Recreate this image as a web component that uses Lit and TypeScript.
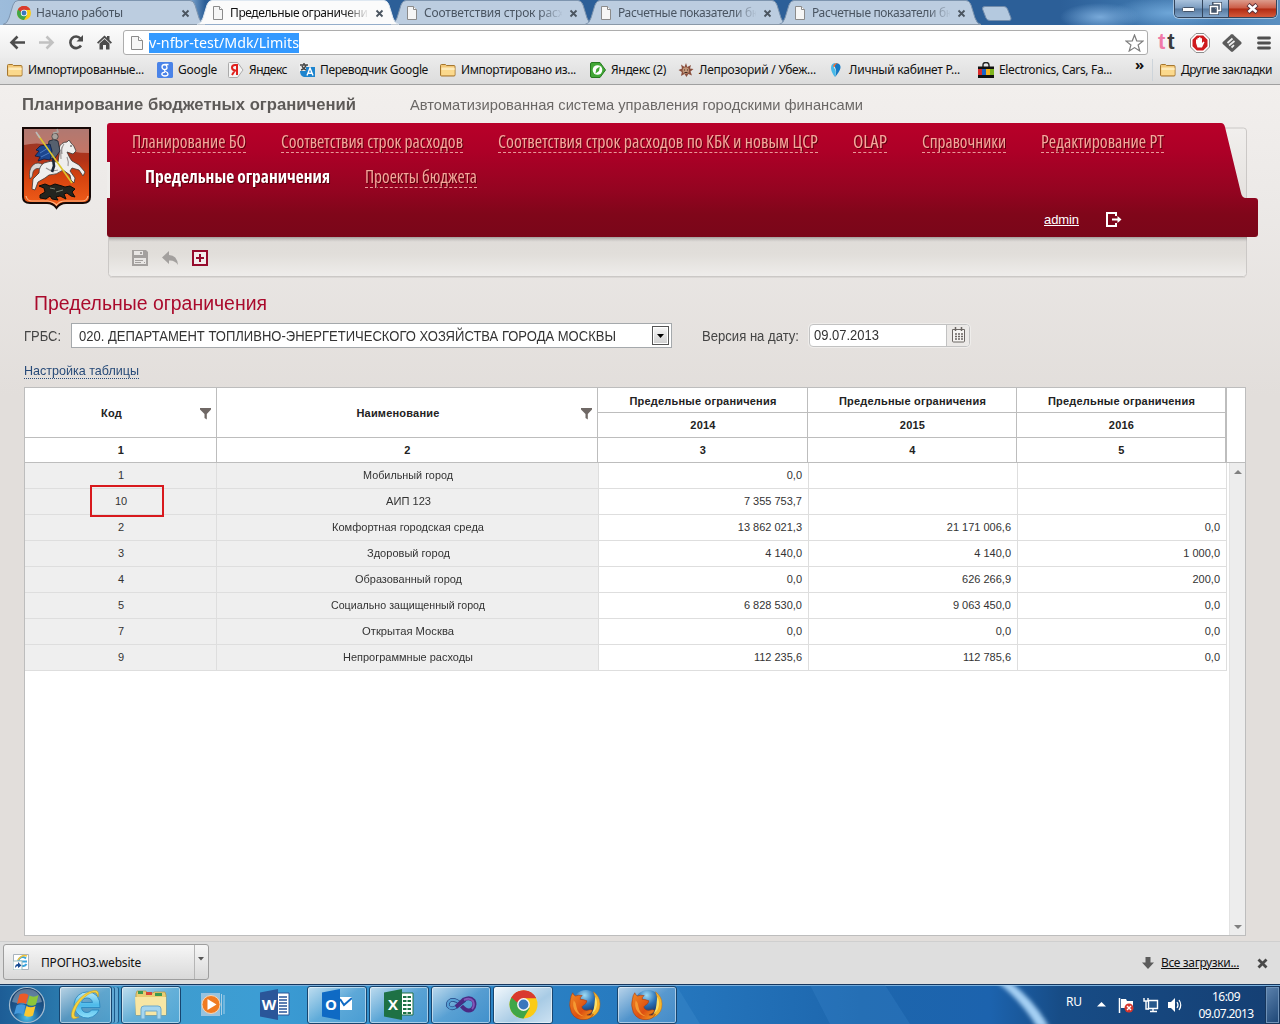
import { LitElement, html, svg, css } from "lit";
import { customElement, property } from "lit/decorators.js";

/* One line of text set to an exact width, by tracking or by condensing. */
@customElement("fit-text")
class FitText extends LitElement {
  @property({ type: Number }) w = 0;
  @property({ type: Boolean }) squeeze = false;
  static styles = css`
    :host { display: inline-block; white-space: nowrap; flex: none; }
    span { display: inline-block; transform-origin: 0 50%; white-space: nowrap; text-decoration: inherit; }
  `;
  firstUpdated() {
    const s = this.renderRoot.querySelector("span") as HTMLElement;
    const natural = s.getBoundingClientRect().width;
    const n = (this.textContent || "").length;
    this.style.width = this.w + "px";
    if (!natural || !n) return;
    if (this.squeeze) s.style.transform = `scaleX(${this.w / natural})`;
    else s.style.letterSpacing = `${(this.w - natural) / n}px`;
  }
  render() {
    return html`<span><slot></slot></span>`;
  }
}

const pageIcon = svg`<path d="M3.500 1.500h6l3 3v10h-9z" fill="#f6f6f6" stroke="#8b8b8b"/><path d="M9.500 1.500v3h3" fill="#fff" stroke="#8b8b8b"/>`;
const pageIconLarge = svg`<path d="M2.500 1.500h7l4 4v9h-11z" fill="#f6f6f6" stroke="#8b8b8b"/><path d="M9.500 1.500v4h4" fill="#fff" stroke="#8b8b8b"/>`;
const folder = svg`<path d="M.5 13V3.500q0-1 1-1h4l1 1h7.500q1 0 1 1V13q0 1-1 1h-12.500q-1 0-1-1z" fill="#f3c878" stroke="#a5772f"/><path d="M1.500 6h13v7h-13z" fill="#fbd98d"/><path d="M1.500 5.500h13v2.500h-13z" fill="#fdeab9"/>`;
const chromeIcon = svg`
  <circle cx="14" cy="14" r="14" fill="#fbcb16"/>
  <path d="M14 14 1.900 7A14 14 0 0 0 14 28l6.100-10.500z" fill="#3fa648"/>
  <path d="M14 14 1.900 7A14 14 0 0 1 26.500 7.600H14z" fill="#d93a2e"/>
  <path d="M1.900 7 8 17.500 14 14z" fill="#3fa648"/>
  <path d="M1.900 7A14 14 0 0 1 26.600 7.700H14a6.400 6.400 0 0 0-6 4.500z" fill="#d93a2e"/>
  <circle cx="14" cy="14" r="6.400" fill="#f6f6f6"/><circle cx="14" cy="14" r="4.900" fill="#3a77bd"/>`;
const closeX = svg`<path d="M1.500 1.500l6 6M7.500 1.500l-6 6" stroke="#4b5560" stroke-width="1.800"/>`;

const firefox = html`<svg width="32" height="32" viewBox="0 0 34 34">
  <defs><radialGradient id="g" cx=".45" cy=".2" r=".8"><stop offset="0" stop-color="#9fdcf5"/><stop offset=".45" stop-color="#2b72b8"/><stop offset="1" stop-color="#10234f"/></radialGradient>
  <linearGradient id="o" x1="0" y1="0" x2="1" y2="1"><stop offset="0" stop-color="#f08a24"/><stop offset=".6" stop-color="#dd4f12"/><stop offset="1" stop-color="#f7a823"/></linearGradient></defs>
  <circle cx="18" cy="15" r="14" fill="url(#g)"/>
  <path d="M26 3q7 5 7 13 0 9-7 13-5 3-11 2 9-2 12-9 3-9-1-19z" fill="#f6b62c" stroke="#c06a12" stroke-width=".5"/>
  <path d="M28 8q3 6 1 12-1 4-5 6 3-5 3-9 .5-5 1-9z" fill="#fbe06a"/>
  <path d="M4 4q1 3 3 3.500 3-1.500 7-.5-2.500 1.500-2 4 3 0 7 1.500 0 3-4 5-2 1-1 3 2 3 6 2 3-1 5 0-1 4-6 5 4 1 7-.5-3 5-9 5.500Q7 33.500 2.500 25-.5 17 1.500 11q.3-4 2.500-7z" fill="url(#o)" stroke="#a8380d" stroke-width=".6"/>
  <path d="M5 12q-2 7 2 12 4 5 9 5-7-3-8-10 0-4-3-7z" fill="#f59a33"/>
</svg>`;

const ieIcon = html`<svg width="32" height="32" viewBox="0 0 32 32">
  <defs><linearGradient id="i" x1="0" y1="0" x2="0" y2="1"><stop offset="0" stop-color="#b9ecfb"/><stop offset=".5" stop-color="#4cb9ea"/><stop offset="1" stop-color="#8fe0fa"/></linearGradient></defs>
  <path d="M17 3a13 13 0 1 0 12 18h-7.500q-1.500 2.500-4.500 2.500-5 0-5.500-5H30Q30.500 3 17 3zm-5.500 10.500Q12.500 9 17 9t5.500 4.500z" fill="url(#i)" stroke="#2483bd" stroke-width=".8"/>
  <path d="M28 8Q30 1 24 1.500 14 3 6 14q-5 8-4.500 13Q2 32 9 28q-6 1-4.500-4.500Q8 12 18 5.500 27 0 28 8z" fill="#f7d23e" stroke="#c99a1b" stroke-width=".5"/>
</svg>`;

@customElement("app-root")
class AppRoot extends LitElement {
  static styles = css`
    :host { display: block; width: 1280px; height: 1024px; overflow: hidden; font-family: "Liberation Sans", Arial, sans-serif; color: #444; }
    * { box-sizing: border-box; }
    svg { display: block; flex: none; }
    .screen { display: flex; flex-direction: column; width: 1280px; height: 1024px; }
    .ui { font-family: "Noto Sans", "Open Sans", sans-serif; color: #111; }

    /* tab strip */
    .strip { height: 25px; display: flex; align-items: flex-start; position: relative; padding-left: 3px;
      background: radial-gradient(ellipse 40px 14px at 1100px 17px, #78a9d9 0, transparent 100%), radial-gradient(ellipse 60px 16px at 1170px 13px, #6ea6d8 0, transparent 100%), linear-gradient(90deg, #9dbcdb 0, #7ea6cf 190px, #2c5f98 205px, #2c5f98 1060px, #386fa7 1120px, #5a8fc0 1280px); }
    .tab { position: relative; width: 202px; height: 25px; margin-right: -8px; display: flex; align-items: center; padding: 1px 0 0 13px; font-size: 12px; color: #4a5562; z-index: 1; }
    .tab.on { z-index: 2; color: #111; }
    .tab .shape { position: absolute; left: 0; top: 0; z-index: -1; }
    .tab .lbl { width: 138px; height: 20px; line-height: 20px; margin-left: 4px; overflow: hidden; -webkit-mask-image: linear-gradient(90deg, #000 115px, transparent 139px); }
    .tab .x { margin-left: 7px; }
    .newtab { margin: 6px 0 0 8px; }
    .winbtns { margin-left: 162px; display: flex; height: 18px; border: 1px solid #33455c; border-top: 0; border-radius: 0 0 5px 5px; overflow: hidden; box-shadow: 0 0 0 1px rgba(255,255,255,.45); }
    .wb { width: 28px; height: 17px; display: grid; place-items: center; background: linear-gradient(#aac3dd, #7b9cc0 48%, #56799f 52%, #7ea2c8); border-right: 1px solid #33455c; }
    .wb.mid { width: 26px; }
    .wb.red { width: 47px; border: 0; background: linear-gradient(#dd9c8c, #cb5b45 48%, #b12a12 52%, #d4593a); }

    /* address row */
    .addr { height: 33px; display: flex; align-items: center; padding: 2px 9px 0 9px; background: linear-gradient(#fcfcfc, #ececec); }
    .omni { margin-left: 9px; width: 1026px; height: 25px; border: 1px solid #adadad; border-radius: 3px; background: #fff; display: flex; align-items: center; padding: 0 3px 0 5px; }
    .url { background: #3399ff; color: #fff; font-size: 15px; height: 20px; line-height: 19px; margin-left: 4px; }
    .omni .star { margin-left: auto; }
    .ext { margin-left: 12px; }
    .menu { margin-left: 15px; }
    .tt { font: bold 22px/22px "Liberation Sans", sans-serif; margin: -2px 0 0 10px; letter-spacing: 2px; width: 20px; color: #3b3b3b; }
    .tt b { color: #f07aa8; }

    .marks { height: 27px; display: grid; grid-template-columns: 150px 71px 71px 141px 150px 88px 150px 150px 157px 25px 1fr; padding: 0 0 3px 7px; align-items: center; background: linear-gradient(#ebebeb, #dcdcdc); border-bottom: 1px solid #a0a0a0; font-size: 12px; }
    .mark { display: flex; gap: 5px; align-items: center; height: 22px; line-height: 22px; }
    .more { font-weight: bold; font-size: 15px; margin-top: -12px; line-height: 16px; }
    .other { border-left: 1px solid #cdd4da; padding-left: 7px; margin-left: -8px; }

    /* page */
    .page { height: 856px; padding-left: 24px; background: linear-gradient(#f2efed 0, #ece9e7 120px, #e2dedb 310px, #e2dedb); display: flex; flex-direction: column; position: relative; }
    .titles { height: 38px; margin-left: -2px; display: flex; line-height: 40px; color: #5d5a58; }
    .titles .a { font-weight: bold; font-size: 17px; }
    .titles .b { font-size: 15px; margin-left: 54px; color: #6b6866; }
    .head { display: flex; height: 158px; align-items: flex-start; margin-left: -2px; }
    .arms { margin-top: 4px; }
    .banner { position: relative; width: 1151px; height: 158px; margin-left: 16px; padding: 8px 0 0 25px; z-index: 0; }
    .banner .art { position: absolute; left: 0; top: 0; z-index: -1; }
    .nav { display: flex; gap: 35px; height: 35px; font: 18px/20px "Open Sans", "Noto Sans", sans-serif; font-stretch: 75%; color: #f5a79b; text-shadow: 1px 1px 0 rgba(50,0,0,.65); }
    .nav fit-text { height: 22px; border-bottom: 1px dashed #e89a98; }
    .nav.sub { padding-left: 13px; }
    .nav .cur { font-weight: bold; color: #fff; border: 0; }
    .user { display: flex; height: 26px; margin: 3px 0 0 912px; color: #fff; font-size: 13px; line-height: 30px; align-items: center; }
    .user fit-text { text-decoration: underline; height: 24px; }
    .user svg { margin: 4px 0 0 27px; }
    .tools { display: flex; gap: 14px; margin-top: 20px; }
    h1 { margin: 0 0 0 10px; font-size: 20px; font-weight: normal; color: #aa0a2c; height: 42px; line-height: 44px; }
    .filters { display: flex; height: 25px; align-items: center; font-size: 14px; }
    .select { margin-left: 10px; width: 601px; height: 25px; border: 1px solid #a5a9ac; background: #fff; display: flex; align-items: center; justify-content: space-between; padding: 0 2px 0 7px; color: #333; }
    .drop { width: 17px; height: 19px; border: 1px solid #555; background: linear-gradient(#f7f7f7, #cfcfcf); display: grid; place-items: center; box-shadow: inset 0 0 0 1px #fff; }
    .ver { margin-left: 30px; }
    .date { margin: -1px 0 0 10px; width: 161px; height: 23px; border: 1px solid #c2c2c2; border-radius: 4px; display: flex; background: #fff; overflow: hidden; line-height: 21px; padding-left: 4px; box-shadow: 0 0 0 1px #efedeb; justify-content: space-between; color: #333; }
    .cal { width: 23px; border-left: 1px solid #c2c2c2; background: #ebe9e7; display: grid; place-items: center; }
    .setup { margin-top: 15px; font-size: 13px; line-height: 15px; height: 24px; color: #274a78; }
    .setup fit-text { height: 16px; border-bottom: 1px dotted #274a78; }

    .grid { width: 1222px; height: 549px; border: 1px solid #bdbdbd; background: #fff; font-size: 11px; color: #333; display: flex; flex-direction: column; }
    .thead { display: grid; grid-template-columns: 192px 381px 210px 209px 210px 1fr; grid-template-rows: 25px 25px 25px; font-weight: bold; color: #222; letter-spacing: .2px; height: 75px; flex: none; }
    .th { border-right: 1px solid #bdbdbd; border-bottom: 1px solid #bdbdbd; display: flex; align-items: center; justify-content: center; padding-left: 1px; padding-top: 1px; }
    .th.up { padding: 0 0 1px 1px; }
    .tall { grid-row: span 2; position: relative; padding: 0 18px 0 0; }
    .tall svg { position: absolute; right: 5px; top: 20px; }
    .th.last { border-right-width: 2px; }
    .pad { grid-column: 6; grid-row: 1 / span 3; border-bottom: 1px solid #bdbdbd; }
    .tbody { display: flex; flex: 1; justify-content: space-between; }
    .rows { width: 1202px; }
    .tr { display: grid; grid-template-columns: 192px 382px 210px 209px 209px; height: 26px; }
    .td { border-right: 1px solid #dedede; border-bottom: 1px solid #dedede; display: flex; align-items: center; justify-content: flex-end; padding: 0 6px 2px 0; }
    .td.k { background: #efefef; justify-content: center; padding: 0 0 2px 1px; }
    .scroll { width: 16px; background: #ededed; display: flex; flex-direction: column; justify-content: space-between; align-items: center; padding: 7px 0 6px; border-left: 1px solid #e2e2e2; }
    .redbox { position: absolute; left: 90px; top: 400px; width: 74px; height: 32px; border: 2px solid #d8191d; }

    /* downloads */
    .dl { height: 43px; border-top: 1px solid #cfcfcf; background: #dedede; display: flex; align-items: center; padding: 0 12px 0 3px; font-size: 12px; }
    .file { width: 206px; height: 36px; margin-top: -2px; border: 1px solid #9e9e9e; border-radius: 3px; background: linear-gradient(#f6f6f6, #d9d9d9); display: flex; align-items: center; padding-left: 9px; }
    .file fit-text { margin-left: 12px; }
    .file .arrow { margin-left: auto; width: 14px; height: 34px; border-left: 1px solid #b5b5b5; padding: 12px 0 0 3px; }
    .dl .down { margin-left: auto; margin-right: 7px; }
    .dl .all { text-decoration: underline; height: 18px; line-height: 18px; }
    .dl .kill { margin-left: 18px; }

    /* taskbar */
    .bar { height: 40px; border-top: 1px solid #17375e; box-shadow: inset 0 1px #7bb0dc; display: flex; align-items: center; padding-left: 8px; color: #fff; position: relative;
      background: linear-gradient(90deg, #1d5d96 0, #2a79ad 60px, #3f9ccd 130px, #3c9dd4 260px, #2b83c5 500px, #2576bd 680px, #1d66ad 860px, #1c63ae 990px, #174c86 1060px, #153f73 1280px); z-index: 0; }
    .streak { position: absolute; left: 640px; top: 0; z-index: -1; }
    .tasks { display: grid; grid-template-columns: 50px 63px 62px 62px 62px 62px 62px 62px 62px 62px 62px; align-items: center; height: 39px; }
    .slot { width: 60px; height: 38px; display: grid; place-items: center; margin-left: 0; }
    .slot.orb { width: 38px; }
    .slot.ie { width: 53px; margin-left: 1px; }
    .open { border: 1px solid #17456f; border-radius: 3px; background: linear-gradient(145deg, rgba(255,255,255,.68), rgba(255,255,255,.2) 50%, rgba(255,255,255,.1)); box-shadow: inset 0 0 0 1px rgba(255,255,255,.5); }
    .active { background: linear-gradient(145deg, #f2f8fc, #a8cbe5 60%, #cde2f2); }
    .stack { box-shadow: inset 0 0 0 1px rgba(255,255,255,.5), 3px 0 0 -1px #5fa7d3, 4px 0 0 -1px #1c5a8b, 7px 0 0 -1px #5fa7d3, 8px 0 0 -1px #1c5a8b; }
    .tray { margin-left: 387px; display: flex; align-items: center; font-size: 12px; }
    .tray .ru { margin: -6px 15px 0 0; }
    .tray svg { margin-right: 9px; }
    .tray .up { margin-right: 12px; }
    .clock { width: 56px; margin-left: 5px; display: flex; flex-direction: column; align-items: center; line-height: 17px; }
    .desk { margin-left: auto; width: 15px; height: 38px; border: 1px solid #16365c; box-shadow: inset 0 0 0 1px #6f92b8; background: linear-gradient(135deg, #5c82ad, #1d4676); }
  `;

  tabs = [
    ["Начало работы", 87], ["Предельные ограничения", 144], ["Соответствия строк расходов", 167],
    ["Расчетные показатели бюджета", 176], ["Расчетные показатели бюджета", 176],
  ] as [string, number][];

  rows = [
    ["1", "Мобильный город", "0,0", "", ""],
    ["10", "АИП 123", "7 355 753,7", "", ""],
    ["2", "Комфортная городская среда", "13 862 021,3", "21 171 006,6", "0,0"],
    ["3", "Здоровый город", "4 140,0", "4 140,0", "1 000,0"],
    ["4", "Образованный город", "0,0", "626 266,9", "200,0"],
    ["5", "Социально защищенный город", "6 828 530,0", "9 063 450,0", "0,0"],
    ["7", "Открытая Москва", "0,0", "0,0", "0,0"],
    ["9", "Непрограммные расходы", "112 235,6", "112 785,6", "0,0"],
  ];
  nameWidths = [90, 45, 152, 83, 107, 154, 92, 130];

  tab(label: string, w: number, i: number) {
    const on = i === 1;
    return html`<div class="tab ${on ? "on" : ""}">
      <svg class="shape" width="202" height="25" viewBox="0 0 202 25">
        <path d="M0 24.500Q4 24 6 18L10 5Q11.500 .5 15 .5H187Q190.500 .5 192 5L196 18Q198 24 202 24.500" fill=${on ? "#fbfbfb" : "#bccde0"} stroke=${on ? "#dfe8f1" : "#7e95af"}/>
        ${on ? "" : svg`<path d="M0 24.500H202" stroke="#8998a8"/>`}
      </svg>
      <svg width="16" height="16" viewBox="0 0 16 16">${i === 0 ? svg`<g transform="translate(1 1) scale(.5)">${chromeIcon}</g>` : pageIcon}</svg>
      <div class="lbl"><fit-text w=${w}>${label}</fit-text></div>
      <svg class="x" width="9" height="9">${closeX}</svg>
    </div>`;
  }

  mark(icon: unknown, label: string, w: number, cls = "") {
    return html`<div class="mark ${cls}"><svg width="16" height="16" viewBox="0 0 16 16">${icon}</svg><fit-text w=${w}>${label}</fit-text></div>`;
  }

  browser() {
    return html`
      <div class="strip ui">
        ${this.tabs.map(([t, w], i) => this.tab(t, w, i))}
        <svg class="newtab" width="31" height="15"><path d="M4 .5H23Q25.500 .5 26.500 3L30 12Q30.500 14.500 28 14.500H9Q6 14.500 5 12L1.500 3Q1 .5 4 .5z" fill="#b4c9df" stroke="#728cab"/></svg>
        <div class="winbtns">
          <div class="wb"><svg width="13" height="6"><rect x=".5" y="1.500" width="12" height="4" rx="1" fill="#fff" stroke="#44546a"/></svg></div>
          <div class="wb mid"><svg width="13" height="13"><path d="M4.500 1.500h7v7h-7z M1.500 4.500h7v7h-7z" fill="none" stroke="#44546a" stroke-width="3"/><path d="M4.500 1.500h7v7h-3M1.500 4.500h7v7h-7z" fill="none" stroke="#fff" stroke-width="1.500"/></svg></div>
          <div class="wb red"><svg width="13" height="11"><path d="M2 1.500l9 8M11 1.500l-9 8" stroke="#5c3038" stroke-width="4.500"/><path d="M2.500 2l8 7M10.500 2l-8 7" stroke="#fff" stroke-width="2.600"/></svg></div>
        </div>
      </div>
      <div class="addr ui">
        <svg width="105" height="18" fill="none" stroke-width="2.600">
          <path d="M16 8.500H2.500M8.500 2.500l-6 6 6 6" stroke="#4c4c4c"/>
          <path d="M30 8.500H43.500M37.500 2.500l6 6-6 6" stroke="#c1c1c1"/>
          <path d="M71.500 4.500A5.800 5.800 0 1 0 72 11.500" stroke="#4c4c4c"/><path d="M67.500 7.500h6.500V1z" fill="#4c4c4c" stroke="none"/>
          <path d="M88 8.500l7.500-7 2.500 2.300V2h2.500v4l2.500 2.500-1.300 1.300L95.500 4l-6.300 5.800z" fill="#4c4c4c" stroke="none"/>
          <path d="M90.500 9.500l5-4.500 5 4.500V15.500h-3.500v-4.500h-3v4.500h-3.500z" fill="#4c4c4c" stroke="none"/>
        </svg>
        <div class="omni">
          <svg width="16" height="16">${pageIconLarge}</svg>
          <fit-text class="url" squeeze w="150">v-nfbr-test/Mdk/Limits</fit-text>
          <svg class="star" width="19" height="18"><path d="M9.500 1l2.200 5.800 6.300.3-4.900 3.900 1.700 6-5.300-3.400-5.300 3.400 1.700-6L1 7.100l6.300-.3z" fill="#fff" stroke="#7d7d7d" stroke-width="1.200"/></svg>
        </div>
        <div class="tt"><b>t</b>t</div>
        <svg class="ext" width="20" height="20"><path d="M6 .5h8l5.500 5.500v8L14 19.500H6L.5 14V6z" fill="#fff" stroke="#8c8c8c"/><path d="M6.800 2.500h6.400l4.300 4.300v6.400l-4.300 4.300H6.800l-4.300-4.300V6.800z" fill="#cf1a1e"/><path d="M6 10V6.500h1.500V9V5H9v4V4.300h1.500V9V5.200H12V10l1.500-1.500 1 .8-2.500 5.200H7.500z" fill="#fff"/></svg>
        <svg class="ext" width="20" height="18"><path d="M9 .5q1-.8 2 0l8.200 7.500q.8 1 0 2L11 17.500q-1 .8-2 0L.8 10q-.8-1 0-2z" fill="#5b5b5b"/><path d="M5.500 9l5-4.500M7 11.500l5.500-4.500M9.500 13.500l2.500-2.300" stroke="#eee" stroke-width="1.700"/></svg>
        <svg class="menu" width="14" height="14"><path d="M1.500 2h11M1.500 7h11M1.500 12h11" stroke="#4f4f4f" stroke-width="2.800" stroke-linecap="round"/></svg>
      </div>
      <div class="marks ui">
        ${this.mark(folder, "Импортированные...", 116)}
        ${this.mark(svg`<rect width="16" height="16" rx="1.500" fill="#4a83e8"/><path d="M11.500 2.500H8Q5 2.600 5 5t3 2.600Q7 9 8.500 9.500 11 10.500 11 12q-.2 2-3 2-3.200-.2-3.200-2 .2-1.600 3.200-1.800M8 2.700q2 .8 2 2.800T8 7.500" fill="none" stroke="#fff" stroke-width="1.300"/>`, "Google", 39)}
        ${this.mark(svg`<path d="M1.500.5h8l5.500 7.500-5.500 7.500h-8q-1 0-1-1v-13q0-1 1-1z" fill="#f4f4f4" stroke="#aaa"/><path d="M9 13V3H7Q4 3 4 5.500T7 8.500h2M6.800 8.500L4 13" fill="none" stroke="#e0201d" stroke-width="2"/>`, "Яндекс", 38)}
        ${this.mark(svg`<rect width="10" height="9" y="1" rx="1" fill="#eee"/><path d="M1 3h8M5 1v2M2 8q4-1 5-5M3 4q2 4 5 4" stroke="#444" stroke-width="1.500" fill="none"/><path d="M1 9h6v-4h9v10H5q-4-1-4-6z" fill="#1d84ce"/><path d="M8 13.500l3-7.500 3 7.500M9 11.200h4" stroke="#fff" stroke-width="1.400" fill="none"/>`, "Переводчик Google", 108)}
        ${this.mark(folder, "Импортировано из...", 115)}
        ${this.mark(svg`<path d="M2 .5h8l5.500 7.500L10 15.500H2Q.5 15.500.5 14V2Q.5.500 2 .5z" fill="#42a836" stroke="#277a20"/><circle cx="7.500" cy="8" r="4.800" fill="#fff"/><path d="M9.800 4.500L9 9l-3.500 2.500.8-4.500z" fill="#42a836"/>`, "Яндекс (2)", 55)}
        ${this.mark(svg`<path d="M8 1l1.300 4 3.700-2-1 3.500 3.500.5-3 2.500 1.500 4-3.700-1.500L8.500 15l-2-3-3.500 2 .8-4L.5 8l3.500-1.500L3 2.500l3.500 2.500z" fill="#8a4f3d"/><circle cx="7.800" cy="8.500" r="3.200" fill="#c09578"/><path d="M6 8h1M9 8h1M6.500 10.500h3" stroke="#442b22"/>`, "Лепрозорий / Убеж...", 117)}
        ${this.mark(svg`<path d="M8 1q5 .5 4.500 5Q11.500 10 7 15q2-6 .5-8.500T8 1z" fill="#1478c2"/><path d="M3 6Q3 1 8 1q-3 2-2 5 3 2 1 9Q3 10 3 6z" fill="#48b9e8"/><path d="M5 4.500q1-4 5-3Q6.500 2 7 5z" fill="#ef6b35"/>`, "Личный кабинет Р...", 111)}
        ${this.mark(svg`<path d="M5 5V3q0-2.500 3-2.500T11 3v2" fill="none" stroke="#222" stroke-width="1.400"/><path d="M0 4.500h16V16H0z" fill="#111"/><path d="M0 7h4v6H0z" fill="#d92b2b"/><path d="M4 7h4v6H4z" fill="#1a64c8"/><path d="M8 7h4v6H8z" fill="#f3b51b"/><path d="M12 7h4v6h-4z" fill="#7fb51f"/>`, "Electronics, Cars, Fa...", 113)}
        <div class="more">»</div>
        ${this.mark(folder, "Другие закладки", 91, "other")}
      </div>`;
  }

  arms() {
    return html`<svg class="arms" width="69" height="84" viewBox="0 0 69 84">
      <defs><linearGradient id="a" x1="0" y1="0" x2="0" y2="1"><stop offset="0" stop-color="#8a3a30"/><stop offset=".4" stop-color="#b23318"/><stop offset=".6" stop-color="#d4420f"/><stop offset="1" stop-color="#f4601a"/></linearGradient></defs>
      <path d="M1 1h67v69q0 6-7 6H44q-6 0-9.500 5Q31 76 25 76H8q-7 0-7-6z" fill="url(#a)" stroke="#160806" stroke-width="2"/>
      <path d="M2 2h65v24Q50 26 34 20T2 18z" fill="#fff" opacity=".32"/>
      <path d="M21 38q-5-4-10 0-5 5-3 14 3-2 3-7 2-5 8-3z" fill="#d8d5d3" stroke="#3d3836" stroke-width=".7"/>
      <path d="M22 36q6-3 14-1 2-9 1-14 2-6 8-6l2-2 2 3q3 2 5 8l-3 3-6-2q3 7 5 9l7 4 6 7-2 4-4-6-7-2-2 3 5 7-1 5-3-3-1-5-7-5q-6 5-14 5l-4 3-7 4-3 8-3-1 1-10 6-6q0-7 5-10z" fill="#efeeed" stroke="#3d3836" stroke-width=".8"/>
      <path d="M42 17q-3 4-2 10M40 20q-2 6-1 12M24 41q5 4 12 2M45 30q2 5 1 9" stroke="#9a9594" stroke-width="1.100" fill="none"/>
      <circle cx="49" cy="19" r=".8" fill="#222"/>
      <path d="M27 14q5-3 9 0l2 10-5 7-5 1-3-5z" fill="#56606e" stroke="#1b222e" stroke-width=".8"/>
      <path d="M28 17q-4 1-10 2l-4 4 3 1-4 5 5 1-2 4 6-2 6 1 2-9z" fill="#1c468f" stroke="#0f1a3c" stroke-width=".8"/>
      <path d="M18 26l8-5M19 30l8-4" stroke="#4d7cc2" stroke-width="1"/>
      <circle cx="33" cy="9.500" r="3.200" fill="#a8a19b" stroke="#444" stroke-width=".8"/><path d="M31 6l5-1-1-3" stroke="#a9a5a0" stroke-width="1.500" fill="none"/>
      <path d="M31 31l1 8-2 6" stroke="#1f2837" stroke-width="2.600" fill="none"/>
      <path d="M16 8l34 48" stroke="#dcc62e" stroke-width="1.600"/><path d="M14 5l4 6" stroke="#bbb" stroke-width="1.600"/>
      <path d="M18 68l5-3-1-4-5-2 6-2 5 2 5-2 7 2 3 1 5-1 5 3-3 3 3 5-4-1-4-3-3 1 2 5-6-3-4 1 2 3-6-1-2-3-4 3-6-1z" fill="#23251f" stroke="#0b0c09"/>
      <path d="M28 61l5 1M34 65l7-2" stroke="#7b8272"/>
      <path d="M4 69q1 5 6 5h16q6 1 8.500 4 3-4 8.500-4h17q5 0 6-5" fill="none" stroke="#ffc9a0" stroke-width="1.200" opacity=".8"/>
    </svg>`;
  }

  banner() {
    return html`<div class="banner">
      <svg class="art" width="1151" height="158" viewBox="0 0 1151 158">
        <defs>
          <linearGradient id="r" x1="0" y1="0" x2="0" y2="1"><stop offset="0" stop-color="#b80029"/><stop offset=".25" stop-color="#ad0027"/><stop offset=".58" stop-color="#950421"/><stop offset=".8" stop-color="#80061a"/><stop offset="1" stop-color="#7a0619"/></linearGradient>
          <linearGradient id="p" x1="0" y1="0" x2="0" y2="1"><stop offset="0" stop-color="#f1efed"/><stop offset=".7" stop-color="#dfdbd8"/><stop offset=".85" stop-color="#e1deda"/><stop offset="1" stop-color="#efedeb"/></linearGradient>
          <linearGradient id="s" x1="0" y1="0" x2="0" y2="1"><stop offset="0" stop-color="#776e6b" stop-opacity=".75"/><stop offset="1" stop-color="#aaa" stop-opacity="0"/></linearGradient>
        </defs>
        <path d="M1.500 5h1135q3 0 3 3v142.500q0 3-3 3H4.500q-3 0-3-3z" fill="url(#p)" stroke="#cbc8c6"/>
        <path d="M3 154.500h1135" stroke="#dad7d4"/>
        <path d="M2 113h1138v6H2z" fill="url(#s)"/>
        <path d="M3 0H1114Q1117 0 1118 4L1134 70Q1135 75 1139 75H1148Q1151 75 1151 78V111Q1151 114 1148 114H3Q0 114 0 111V3Q0 0 3 0z" fill="url(#r)"/>
        <path d="M0 39h3v36H0z" fill="#efedeb"/>
      </svg>
      <div class="nav">
        ${([["Планирование БО", 114], ["Соответствия строк расходов", 182], ["Соответствия строк расходов по КБК и новым ЦСР", 320], ["OLAP", 34], ["Справочники", 84], ["Редактирование РТ", 123]] as [string, number][]).map(([t, w]) => html`<fit-text squeeze w=${w}>${t}</fit-text>`)}
      </div>
      <div class="nav sub"><fit-text class="cur" squeeze w="185">Предельные ограничения</fit-text><fit-text squeeze w="112">Проекты бюджета</fit-text></div>
      <div class="user"><fit-text w="35">admin</fit-text>
        <svg width="16" height="15"><path d="M10 4V1H1v13h9v-3" fill="none" stroke="#fff" stroke-width="2"/><path d="M6 7.500h6" stroke="#fff" stroke-width="2"/><path d="M11.500 4l4 3.500-4 3.500z" fill="#fff"/></svg>
      </div>
      <div class="tools">
        <svg width="16" height="16"><path d="M0 0h14l2 2v14H0z" fill="#a3a09e"/><path d="M2 1h9v4H2zM2 8h12v6H2z" fill="#e8e6e4"/><path d="M8 2h2v2H8zM3 10h8v1H3zM3 12h6v1H3zM12 12h1v1h-1z" fill="#a3a09e"/></svg>
        <svg width="16" height="16"><path d="M7 1v4q8 0 9 10-3-5-9-4.500V14L0 7.500z" fill="#a3a09e"/></svg>
        <svg width="16" height="16"><path d="M1 1h14v14H1z" fill="#f2ecec" stroke="#960b2c" stroke-width="2"/><path d="M8 4v8M4 8h8" stroke="#960b2c" stroke-width="2"/></svg>
      </div>
    </div>`;
  }

  table() {
    const funnel = html`<svg width="11" height="12"><path d="M0 0h11v1.500L6.800 6v5.500L4.500 10V6L0 1.500z" fill="#6f6865"/></svg>`;
    const years = ["2014", "2015", "2016"];
    const last = (i: number) => (i === 2 ? "last" : "");
    return html`<div class="grid">
      <div class="thead">
        <div class="th tall">Код${funnel}</div>
        <div class="th tall">Наименование${funnel}</div>
        ${years.map((_, i) => html`<div class="th ${last(i)}">Предельные ограничения</div>`)}
        <div class="pad"></div>
        ${years.map((y, i) => html`<div class="th up ${last(i)}">${y}</div>`)}
        ${["1", "2", "3", "4", "5"].map((n, i) => html`<div class="th up ${last(i - 2)}">${n}</div>`)}
      </div>
      <div class="tbody">
        <div class="rows">${this.rows.map((r, k) => html`<div class="tr">${r.map((c, i) => html`<div class="td ${i < 2 ? "k" : ""}">${i === 1 ? html`<fit-text squeeze w=${this.nameWidths[k]}>${c}</fit-text>` : c}</div>`)}</div>`)}</div>
        <div class="scroll">
          <svg width="8" height="4"><path d="M0 4l4-4 4 4z" fill="#808080"/></svg>
          <svg width="8" height="4"><path d="M0 0l4 4 4-4z" fill="#808080"/></svg>
        </div>
      </div>
    </div>`;
  }

  office(letter: string, color: string, art: unknown) {
    return html`<svg width="30" height="31" viewBox="0 0 30 31">
      ${art}<path d="M0 3.500L18 0v31L0 27.500z" fill=${color}/>
      <text x="9" y="21" text-anchor="middle" font-family="Open Sans, sans-serif" font-weight="bold" font-size="15" fill="#fff">${letter}</text></svg>`;
  }

  taskbar() {
    return html`<div class="bar ui">
      <svg class="streak" width="620" height="39"><defs><filter id="b"><feGaussianBlur stdDeviation="2"/></filter></defs>
        <path d="M0 0H36L60 39H0z" fill="#4b99d5" opacity=".25"/><path d="M170 0h75l25 39h-80z" fill="#3f8bd0" opacity=".25"/>
        <path d="M357 -3h13q24 18 39 45h-12q-16-27-40-45z" fill="#a5d0f4" filter="url(#b)"/></svg>
      <div class="tasks">
        <div class="slot orb"><svg width="38" height="38" viewBox="0 0 38 38">
          <defs><radialGradient id="w" cx=".5" cy=".85" r=".8"><stop offset="0" stop-color="#4dc2e8"/><stop offset=".45" stop-color="#1d5f9b"/><stop offset="1" stop-color="#173c66"/></radialGradient></defs>
          <circle cx="19" cy="19" r="17.500" fill="url(#w)" stroke="#a3bcd0" stroke-width="1.200"/><path d="M4 16Q7 3 19 3t15 13Q19 20 4 16z" fill="#fff" opacity=".3"/>
          <path d="M11.500 8.500q5-2 9 .5l-2.500 9q-4-2.500-9 0z" fill="#ec5a27"/><path d="M21.500 9.500q4 2.500 9-.5l-2.500 9.500q-4 2.500-9 0z" fill="#8cc63a"/><path d="M8.500 19.500q5-2.500 9 0l-2.500 9q-4-2.500-9 0z" fill="#4499dd"/><path d="M18.500 20q4 2.500 9 0L25 29.500q-4 2.500-9 0z" fill="#fbc82f"/></svg></div>
        <div class="slot ie open stack">${ieIcon}</div>
        <div class="slot open"><svg width="34" height="31" viewBox="0 0 34 31"><path d="M2 5l1-3h9l1 2h6l1-1h11l1 3v20H2z" fill="#e9cd74" stroke="#b4923f" stroke-width=".7"/><path d="M4 2h5v3H4zM21 4h7v3h-7z" fill="#3b9950"/><path d="M12 3h6v3h-6z" fill="#d84538"/><path d="M1 8h31v18H2z" fill="#f7e6a4"/><path d="M7 30V20q0-3 3-3h14q3 0 3 3v10h-4v-8H11v8z" fill="#a5d6ef" stroke="#6ca9cd"/></svg></div>
        <div class="slot"><svg width="28" height="26" viewBox="0 0 28 26"><path d="M2 1h19v23H2z" fill="#97c3df"/><path d="M22.500 2v21M25 3v19" stroke="#a9d0e8"/><circle cx="12" cy="12.500" r="9" fill="#f07b22" stroke="#fbd5b0"/><path d="M8.500 7l9 5.500-9 5.500z" fill="#fff"/></svg></div>
        <div class="slot">${this.office("W", "#2a5699", svg`<path d="M16 4h13v22H16z" fill="#fff" stroke="#2a5699"/><path d="M19 8h8M19 11h8M19 14h8M19 17h8M19 20h8M19 23h8" stroke="#2a5699" stroke-width="1.500"/>`)}</div>
        <div class="slot open">${this.office("O", "#0f6ac4", svg`<path d="M16 8h14v13H16z" fill="#fff"/><path d="M18 10l4 6 8-7" fill="none" stroke="#0f6ac4" stroke-width="2"/>`)}</div>
        <div class="slot open">${this.office("X", "#1e7145", svg`<path d="M16 4h13v22H16z" fill="#fff" stroke="#1e7145"/><path d="M19 8h8M19 12h8M19 16h8M19 20h8M19 24h8" stroke="#1e7145" stroke-width="2" stroke-dasharray="3.500 1"/>`)}</div>
        <div class="slot open"><svg width="32" height="18" viewBox="0 0 32 18"><path d="M16 8Q11 3 6 4 2 6 3 10q3 4 8 1l9-7" fill="none" stroke="#244583" stroke-width="3.600"/><path d="M16 8Q11 3 6 4 2 6 3 10q3 4 8 1" fill="none" stroke="#559fd5" stroke-width="2.200"/><path d="M11 11l8-7.500q6-3 9.500 1 2.500 5-1.500 9-5 3-10.500-3.500" fill="none" stroke="#4b2a84" stroke-width="4"/><path d="M19 4q6-3 9 1 2 5-1 8" fill="none" stroke="#8257b8" stroke-width="2"/></svg></div>
        <div class="slot open active"><svg width="29" height="29" viewBox="-.5 -.5 29 29">${chromeIcon}</svg></div>
        <div class="slot">${firefox}</div>
        <div class="slot open">${firefox}</div>
      </div>
      <div class="tray">
        <fit-text class="ru" w="16">RU</fit-text>
        <svg class="up" width="9" height="5"><path d="M0 4.500l4.500-4.500 4.500 4.500z" fill="#fff"/></svg>
        <svg width="16" height="16"><path d="M1.500 1v15" stroke="#fff" stroke-width="1.500"/><path d="M3 2h5l1 2h6v7H3z" fill="#fff"/><circle cx="11" cy="11" r="4.500" fill="#d5352c"/><path d="M9 9l4 4M13 9l-4 4" stroke="#fff" stroke-width="1.400"/></svg>
        <svg width="16" height="16"><path d="M5.500 3.500h9v8h-9z" fill="#28588a" stroke="#fff" stroke-width="1.400"/><path d="M7 14.500h7M10 12v2M1 1v3h4V1M3 4v8h3" stroke="#fff" stroke-width="1.400" fill="none"/></svg>
        <svg width="16" height="16"><path d="M0 5h3l4-4v14l-4-4H0z" fill="#fff"/><path d="M9 5q2 3 0 6M11 3q3.500 5 0 10" stroke="#fff" fill="none" stroke-width="1.200"/></svg>
        <div class="clock"><fit-text w="28">16:09</fit-text><fit-text w="55">09.07.2013</fit-text></div>
      </div>
      <div class="desk"></div>
    </div>`;
  }

  render() {
    return html`<div class="screen">
      ${this.browser()}
      <div class="page">
        <div class="titles"><fit-text class="a" squeeze w="334">Планирование бюджетных ограничений</fit-text><fit-text class="b" squeeze w="453">Автоматизированная система управления городскими финансами</fit-text></div>
        <div class="head">${this.arms()}${this.banner()}</div>
        <h1><fit-text squeeze w="233">Предельные ограничения</fit-text></h1>
        <div class="filters">
          <fit-text squeeze w="37">ГРБС:</fit-text>
          <div class="select"><fit-text squeeze w="537">020. ДЕПАРТАМЕНТ ТОПЛИВНО-ЭНЕРГЕТИЧЕСКОГО ХОЗЯЙСТВА ГОРОДА МОСКВЫ</fit-text>
            <div class="drop"><svg width="7" height="4"><path d="M0 0h7L3.500 4z" fill="#000"/></svg></div></div>
          <fit-text class="ver" squeeze w="97">Версия на дату:</fit-text>
          <div class="date"><fit-text squeeze w="65">09.07.2013</fit-text>
            <div class="cal"><svg width="15" height="16"><path d="M1.500 2.500h12v11.500q0 1-1 1h-10q-1 0-1-1z" fill="#f5f3f1" stroke="#6b6663"/><path d="M4.500 0v4M10.500 0v4" stroke="#6b6663" stroke-width="1.500"/><path d="M4 7h8M4 9.500h8M4 12h8" stroke="#6b6663" stroke-width="1.500" stroke-dasharray="2 1"/></svg></div></div>
        </div>
        <div class="setup"><fit-text squeeze w="115">Настройка таблицы</fit-text></div>
        ${this.table()}
        <div class="redbox"></div>
      </div>
      <div class="dl ui">
        <div class="file">
          <svg width="16" height="16"><path d="M.5.5h15v15H.5z" fill="#fff" stroke="#a9b3bc"/><path d="M13 4.500A4.500 4.500 0 1 0 13.500 10M6 7.500h8" fill="none" stroke="#3aa4dc" stroke-width="2"/><path d="M5 6Q9 0 14 2" stroke="#f0c33b" fill="none" stroke-width="1.500"/><path d="M0 7h9v9H0z" fill="#fff" stroke="#9bb"/><path d="M2 14q0-4 3-4V8l3.500 3.500L5 14v-2q-1.500 0-3 2z" fill="#174b94"/></svg>
          <fit-text w="100">ПРОГНОЗ.website</fit-text>
          <div class="arrow"><svg width="6" height="4"><path d="M0 0h6L3 3.500z" fill="#555"/></svg></div>
        </div>
        <svg class="down" width="12" height="12"><path d="M3.500 0h5v5.500H12L6 12 0 5.500h3.500z" fill="#5c5c5c"/></svg>
        <fit-text class="all" w="78">Все загрузки...</fit-text>
        <svg class="kill" width="11" height="11"><path d="M1.500 1.500l8 8M9.500 1.500l-8 8" stroke="#484848" stroke-width="2.800"/></svg>
      </div>
      ${this.taskbar()}
    </div>`;
  }
}
